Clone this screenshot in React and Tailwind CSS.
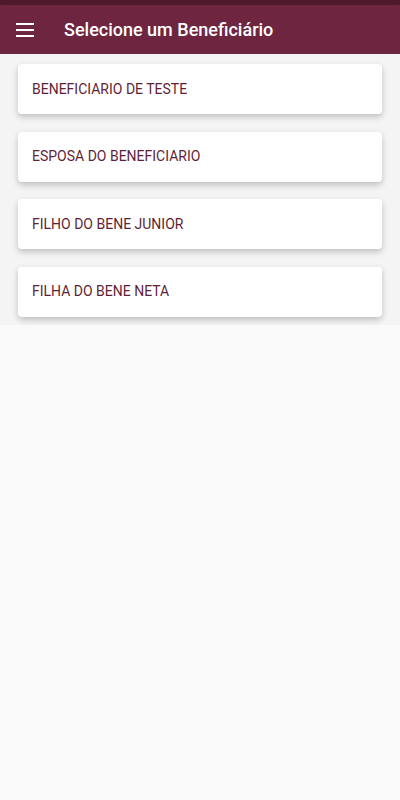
import React from 'react';

const beneficiarios = [
  'BENEFICIARIO DE TESTE',
  'ESPOSA DO BENEFICIARIO',
  'FILHO DO BENE JUNIOR',
  'FILHA DO BENE NETA',
];

const App = () => {
  return (
    <div className="min-h-[800px] w-[400px] bg-[#fafafa] font-['Roboto',sans-serif]">
      {/* status bar */}
      <div className="h-[5px] bg-[#4e1a2c]" />
      <header className="flex h-[49px] items-center bg-[#6e2540] shadow-md">
        <button className="ml-[16px] flex h-[18px] w-[18px] items-center justify-center">
          <svg width="18" height="14" viewBox="0 0 18 14">
            <rect x="0" y="0" width="18" height="2" fill="#fff" />
            <rect x="0" y="6" width="18" height="2" fill="#fff" />
            <rect x="0" y="12" width="18" height="2" fill="#fff" />
          </svg>
        </button>
        <h1 className="ml-[30px] text-[18px] font-medium text-white">Selecione um Beneficiário</h1>
      </header>

      <div className="flex flex-col gap-[17.5px] bg-[#f4f4f4] px-[18px] pb-[8px] pt-[10px]">
        {beneficiarios.map((nome) => (
          <div
            key={nome}
            className="flex h-[50px] items-center rounded-[4px] bg-white px-[14px] shadow-[0_3px_6px_rgba(0,0,0,0.22)]"
          >
            <span className="text-[14px] text-[#5f1f36]">{nome}</span>
          </div>
        ))}
      </div>
    </div>
  );
};

export default App;
